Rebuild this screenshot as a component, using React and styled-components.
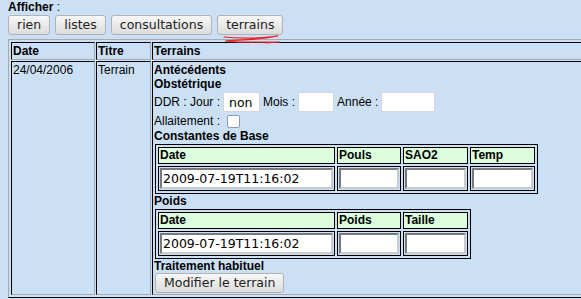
import styled, { createGlobalStyle } from 'styled-components';

const GlobalStyle = createGlobalStyle`
    html, body {
        margin: 0;
        background: #cce0f5;
        overflow: hidden;
    }
    body {
        padding-left: 8px;
        font-family: "Liberation Sans", Arial, sans-serif;
        font-size: 12px;
        color: #000;
    }
`;

const constantes = [
    { label: 'Date', width: 177, value: '2009-07-19T11:16:02' },
    { label: 'Pouls', width: 64 },
    { label: 'SAO2', width: 65 },
    { label: 'Temp', width: 65 },
];

const poids = [
    { label: 'Date', width: 177, value: '2009-07-19T11:16:02' },
    { label: 'Poids', width: 64 },
    { label: 'Taille', width: 65 },
];

function Measures({ columns }) {
    return (
        <InnerTable>
            <tbody>
                <tr>
                    {columns.map(c => (
                        <InnerHead key={c.label} $width={c.width}>{c.label}</InnerHead>
                    ))}
                </tr>
                <tr>
                    {columns.map(c => (
                        <InnerCell key={c.label}>
                            <CellInput $width={c.width - 4} defaultValue={c.value || ''} />
                        </InnerCell>
                    ))}
                </tr>
            </tbody>
        </InnerTable>
    );
}

export default function App() {
    return (
        <Page>
            <GlobalStyle />
            <Heading><b>Afficher</b> :</Heading>
            <Toolbar>
                <Button>rien</Button>
                <Button>listes</Button>
                <Button>consultations</Button>
                <Button>terrains</Button>
            </Toolbar>
            <Scribble width="64" height="14" viewBox="0 0 64 14">
                <path
                    d="M2 3 C 20 5, 40 4, 56 2 L 44 4 C 30 6, 10 6, 3 7 C 20 9, 40 8, 58 8 L 44 9"
                    fill="none"
                    stroke="#e8202a"
                    strokeWidth="1.2"
                    strokeLinecap="round"
                />
            </Scribble>
            <MainTable>
                <tbody>
                    <tr>
                        <Cell as="th" $width={84}>Date</Cell>
                        <Cell as="th" $width={55}>Titre</Cell>
                        <Cell as="th">Terrains</Cell>
                    </tr>
                    <tr>
                        <Cell>24/04/2006</Cell>
                        <Cell>Terrain</Cell>
                        <Cell>
                            <Label>Antécédents</Label>
                            <Label>Obstétrique</Label>
                            <FieldRow $height={22}>
                                <span>DDR : Jour :</span>
                                <TextInput $width={37} defaultValue="non" />
                                <span>Mois :</span>
                                <TextInput $width={36} />
                                <span>Année :</span>
                                <TextInput $width={54} />
                            </FieldRow>
                            <FieldRow $height={16}>
                                <span>Allaitement :</span>
                                <Check type="checkbox" />
                            </FieldRow>
                            <Label>Constantes de Base</Label>
                            <Measures columns={constantes} />
                            <Label>Poids</Label>
                            <Measures columns={poids} />
                            <Label>Traitement habituel</Label>
                            <Button $inset>Modifier le terrain</Button>
                        </Cell>
                    </tr>
                </tbody>
            </MainTable>
        </Page>
    );
}

const Page = styled.div`
    position: relative;
    line-height: 14px;
`;

const Heading = styled.div`
    height: 14px;
`;

const Toolbar = styled.div`
    display: flex;
    gap: 5px;
    margin-top: 1px;
`;

const Button = styled.button`
    height: 20px;
    padding: 0 8px;
    margin-left: ${p => (p.$inset ? '1px' : '0')};
    font-family: "DejaVu Sans", sans-serif;
    font-size: 12.5px;
    line-height: 18px;
    color: #222;
    border: 1px solid #aeb3b8;
    border-radius: 3px;
    background: linear-gradient(#f7f7f7, #dcdcdc);
    cursor: pointer;
`;

const Scribble = styled.svg`
    position: absolute;
    left: 214px;
    top: 34px;
`;

const MainTable = styled.table`
    margin-top: 4px;
    width: 640px;
    border-collapse: separate;
    border-spacing: 1px;
    padding: 1px;
    border: 1px solid;
    border-color: #aaa #000 #000 #aaa;
`;

const Cell = styled.td`
    box-sizing: border-box;
    width: ${p => (p.$width ? p.$width + 'px' : 'auto')};
    padding: 1px;
    border: 1px solid;
    border-color: #000 #aaa #aaa #000;
    text-align: left;
    vertical-align: top;
    line-height: 14px;
`;

const Label = styled.div`
    font-weight: bold;
    height: 14px;
`;

const FieldRow = styled.div`
    display: flex;
    align-items: center;
    gap: 3px;
    height: ${p => p.$height}px;
`;

const TextInput = styled.input`
    box-sizing: border-box;
    width: ${p => p.$width}px;
    height: 20px;
    margin: 0;
    padding: 0 5px;
    border: 1px solid #d4d8dc;
    background: #fff;
    font-family: "DejaVu Sans", sans-serif;
    font-size: 12.5px;
    color: #000;
`;

const Check = styled.input`
    appearance: none;
    box-sizing: border-box;
    width: 13px;
    height: 13px;
    margin: 0 0 0 4px;
    border: 1px solid #8f9aa5;
    border-radius: 2px;
    background: #fff;
`;

const InnerTable = styled.table`
    margin: 1px 0 0 1px;
    border-collapse: separate;
    border-spacing: 2px;
    border: 1px solid #000;
`;

const InnerHead = styled.th`
    box-sizing: border-box;
    width: ${p => p.$width}px;
    padding: 1px;
    border: 1px solid #000;
    background: #ddfedd;
    text-align: left;
    line-height: 13px;
`;

const InnerCell = styled.td`
    padding: 1px;
    border: 1px solid #000;
`;

const CellInput = styled.input`
    display: block;
    box-sizing: border-box;
    width: ${p => p.$width}px;
    height: 21px;
    margin: 0;
    padding: 0 1px;
    border: 2px inset #c8ccd0;
    background: #fff;
    font-family: "DejaVu Sans", sans-serif;
    font-size: 12.5px;
    color: #000;
`;
